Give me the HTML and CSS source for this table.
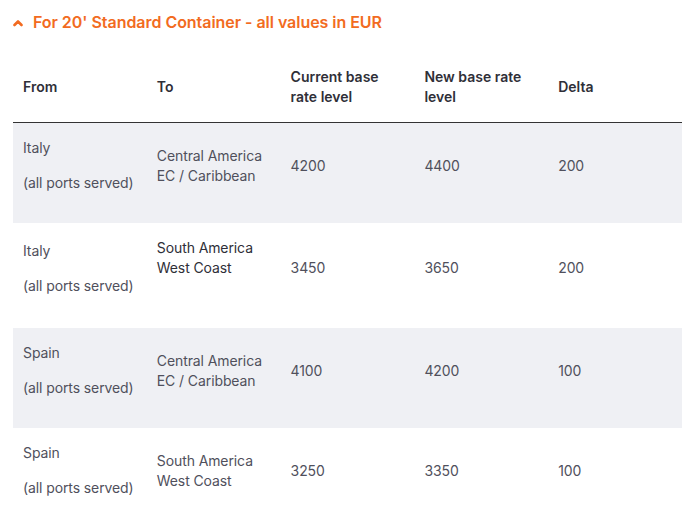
FILE: index.html
```html
<!DOCTYPE html>
<html>
<head>
<meta charset="utf-8">
<link rel="stylesheet" href="styles.css">
</head>
<body>
<div class="title">
  <svg class="chev" width="10" height="8" viewBox="0 0 10 8"><polyline points="1.5,6 5,2.5 8.5,6" fill="none" stroke="#f26b21" stroke-width="2.6" stroke-linecap="round" stroke-linejoin="round"/></svg>
  <span>For 20' Standard Container - all values in EUR</span>
</div>
<table class="rates">
  <thead>
    <tr><th>From</th><th>To</th><th>Current base rate level</th><th>New base rate level</th><th>Delta</th></tr>
  </thead>
  <tbody>
    <tr class="alt">
      <td><p>Italy</p><p>(all ports served)</p></td>
      <td><p>Central America<br>EC / Caribbean</p></td>
      <td><p>4200</p></td><td><p>4400</p></td><td><p>200</p></td>
    </tr>
    <tr>
      <td><p>Italy</p><p>(all ports served)</p></td>
      <td><p class="strong">South America<br>West Coast</p></td>
      <td><p>3450</p></td><td><p>3650</p></td><td><p>200</p></td>
    </tr>
    <tr class="alt">
      <td><p>Spain</p><p>(all ports served)</p></td>
      <td><p>Central America<br>EC / Caribbean</p></td>
      <td><p>4100</p></td><td><p>4200</p></td><td><p>100</p></td>
    </tr>
    <tr>
      <td><p>Spain</p><p>(all ports served)</p></td>
      <td><p>South America<br>West Coast</p></td>
      <td><p>3250</p></td><td><p>3350</p></td><td><p>100</p></td>
    </tr>
  </tbody>
</table>
</body>
</html>
```
FILE: styles.css
```css
html, body { margin: 0; padding: 0; background: #fff; }
body { font-family: Inter, "Noto Sans", sans-serif; color: #50505c; }
.title {
  height: 44px;
  padding-left: 13px;
  display: flex;
  align-items: center;
  gap: 10px;
  color: #f26b21;
  font-size: 16px;
  font-weight: 600;
  letter-spacing: -0.04px;
}
.chev { display: block; margin-top: 1px; }
.rates {
  margin: 8px 0 0 13px;
  width: 669px;
  border-collapse: collapse;
  table-layout: fixed;
  font-size: 14px;
  line-height: 20px;
}
.rates th {
  text-align: left;
  font-weight: 600;
  color: #2f2f38;
  padding: 15px 10px;
  border-bottom: 1px solid #333;
  vertical-align: middle;
}
.rates td {
  padding: 15px 10px;
  vertical-align: middle;
  letter-spacing: -0.1px;
}
.rates td p { margin: 0 0 15px; }
.rates td p.strong { color: #2f2f38; font-weight: 400; margin-bottom: 35px; }
.rates tr.alt td { background: #eff0f4; }
```
